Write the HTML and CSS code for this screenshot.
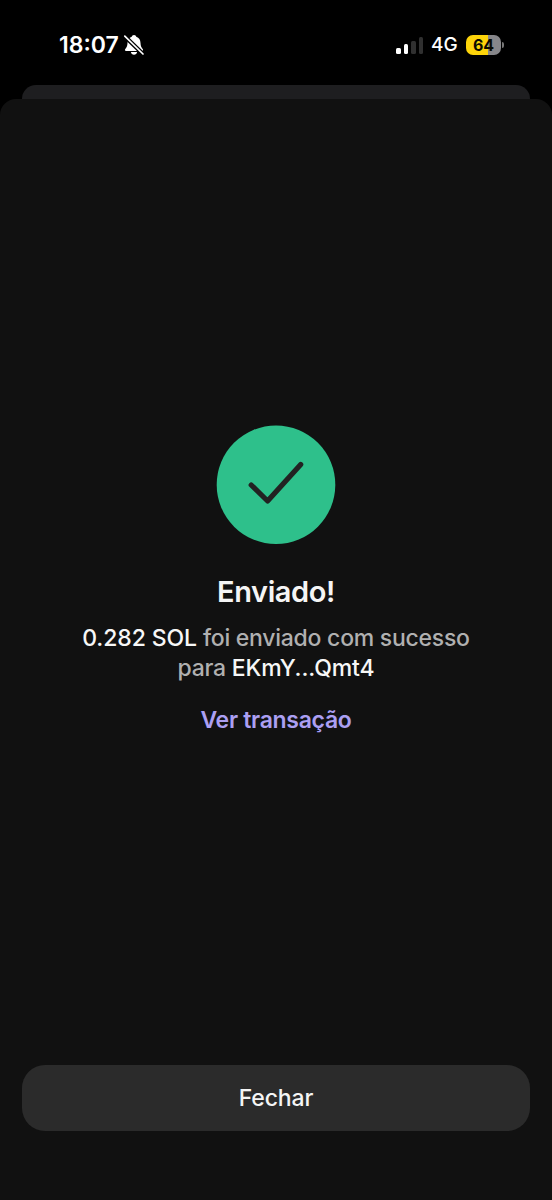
FILE: index.html
```html
<!DOCTYPE html>
<html lang="pt">
<head>
<meta charset="utf-8">
<title>Enviado</title>
<link rel="stylesheet" href="styles.css">
</head>
<body>
<div class="screen">
  <header class="status">
    <div class="status-left">
      <span class="time">18:07</span>
      <svg class="bell" viewBox="0 0 22 22" width="22" height="22">
        <path fill="#fff" d="M11 .9C9.700.9 8.900 1.700 8.700 2.800C5.900 3.700 4.600 6 4.500 9C4.400 12.200 3.700 13.200 2.300 14.900C1.500 16 2 16.900 3.200 16.900H18.800C20 16.900 20.500 16 19.700 14.900C18.300 13.200 17.600 12.200 17.500 9C17.400 6 16.100 3.700 13.300 2.800C13.100 1.700 12.300.9 11 .9ZM7.900 18C8.200 19.700 9.400 20.700 11 20.700S13.800 19.700 14.100 18Z"/>
        <path stroke="#000" stroke-width="4.200" d="M1 1.500L20.500 20.500"/>
        <path stroke="#fff" stroke-width="1.700" stroke-linecap="round" d="M1.800 2.200L20 20"/>
      </svg>
    </div>
    <div class="status-right">
      <div class="signal"><i class="bar b1"></i><i class="bar b2"></i><i class="bar b3 off"></i><i class="bar b4 off"></i></div>
      <span class="network">4G</span>
      <div class="battery">64</div>
      <i class="nub"></i>
    </div>
  </header>
  <div class="back-sheet"></div>
  <main class="sheet">
    <svg class="check" viewBox="0 0 120 120" width="120" height="120">
      <circle cx="60" cy="59.700" r="59.300" fill="#2ec08b"/>
      <path d="M35.200 60L51.600 76L84.700 39.400" fill="none" stroke="#222" stroke-width="5.200" stroke-linecap="round" stroke-linejoin="round"/>
    </svg>
    <h1 class="title">Enviado!</h1>
    <p class="message"><span class="line first"><b>0.282 SOL</b> foi enviado com sucesso</span><span class="line second">para <b>EKmY...Qmt4</b></span></p>
    <a class="link">Ver transação</a>
    <button class="close"><span>Fechar</span></button>
  </main>
</div>
</body>
</html>
```
FILE: styles.css
```css
* { box-sizing: border-box; }
body { margin: 0; background: #000; font-family: Inter, "Liberation Sans", sans-serif; }
.screen { width: 552px; height: 1200px; display: flex; flex-direction: column; overflow: hidden; }
.status { height: 85px; flex: none; padding: 30px 48px 0 59px; display: flex; justify-content: space-between; align-items: flex-start; color: #fff; }
.status-left, .status-right { display: flex; align-items: center; height: 30px; }
.time { font-size: 23px; font-weight: 600; line-height: 30px; letter-spacing: 0; width: 64px; white-space: nowrap; }
.signal { display: flex; align-items: flex-end; gap: 3px; height: 17px; width: 27px; }
.bar { width: 4.5px; background: #fff; border-radius: 1.5px; }
.b1 { height: 6px; }
.b2 { height: 10px; }
.b3 { height: 13px; }
.b4 { height: 17px; }
.off { background: #303030; }
.network { font-size: 19px; font-weight: 500; line-height: 32px; width: 26px; margin-left: 8px; white-space: nowrap; }
.battery { width: 35px; height: 20px; margin-left: 9px; border-radius: 7px; background: linear-gradient(90deg, #fdd40a 64%, #87878a 64%); color: #0b0b00; font-size: 16px; font-weight: 700; line-height: 20px; letter-spacing: -0.2px; text-align: center; }
.nub { width: 2px; height: 6px; margin-left: 1px; background: #777; border-radius: 0 2px 2px 0; }
.back-sheet { flex: none; height: 30px; margin: 0 22px -16px; background: #1e1e20; border-radius: 14px 14px 0 0; }
.sheet { position: relative; flex: 1; background: #111; border-radius: 16px 16px 0 0; padding: 326px 22px 0; display: flex; flex-direction: column; align-items: center; }
.check { flex: none; display: block; }
.title { margin: 29px 0 0; color: #f5f5f5; font-size: 29px; font-weight: 600; line-height: 36px; letter-spacing: -0.4px; }
.message { margin: 13px 0 0; color: #b0b0b0; font-size: 23px; font-weight: 500; line-height: 30px; letter-spacing: -0.25px; display: flex; flex-direction: column; align-items: center; white-space: nowrap; }
.message b { color: #f7f7f7; font-weight: 500; letter-spacing: -0.1px; }
.link { margin-top: 22px; color: #ab9ff2; font-size: 23px; font-weight: 600; line-height: 30px; letter-spacing: -0.3px; }
.close { margin: 330px 0 0; width: 508px; height: 66px; border: 0; border-radius: 23px; background: #2b2b2b; color: #f5f5f5; font: 500 23px/30px Inter, "Liberation Sans", sans-serif; letter-spacing: -0.15px; }
```
